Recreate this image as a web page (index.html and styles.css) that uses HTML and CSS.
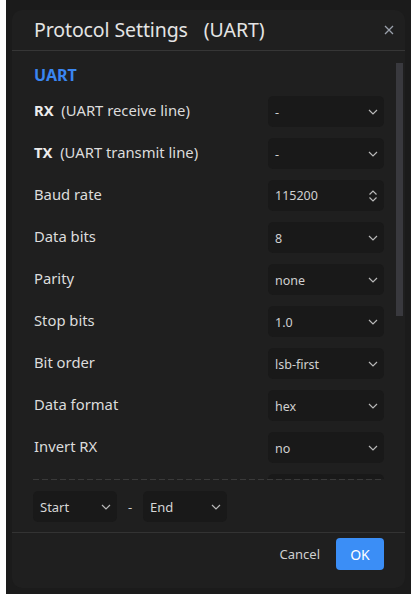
FILE: index.html
```html
<!DOCTYPE html>
<html>
<head>
<meta charset="utf-8">
<link rel="stylesheet" href="styles.css">
</head>
<body>
<div class="backdrop">
  <div class="dialog">
    <div class="header">
      <div class="title">Protocol Settings<span class="sub">(UART)</span></div>
      <svg class="close" width="10" height="10" viewBox="0 0 10 10"><path d="M1 1 L9 9 M9 1 L1 9" stroke="#9aa0ab" stroke-width="1.3" fill="none"/></svg>
    </div>
    <div class="body">
      <div class="section">UART</div>
      <div class="rows">
        <div class="row"><div class="label"><b>RX</b>&nbsp; (UART receive line)</div><div class="select"><span class="val">-</span><svg class="chev" width="10" height="6" viewBox="0 0 10 6"><path d="M1 1 L5 5 L9 1" /></svg></div></div>
        <div class="row"><div class="label"><b>TX</b>&nbsp; (UART transmit line)</div><div class="select"><span class="val">-</span><svg class="chev" width="10" height="6" viewBox="0 0 10 6"><path d="M1 1 L5 5 L9 1" /></svg></div></div>
        <div class="row"><div class="label">Baud rate</div><div class="select"><span class="val num">115200</span><svg class="chev" width="10" height="12" viewBox="0 0 10 12"><path d="M1.5 4.5 L5 1 L8.5 4.5 M1.5 7.5 L5 11 L8.5 7.5" /></svg></div></div>
        <div class="row"><div class="label">Data bits</div><div class="select"><span class="val">8</span><svg class="chev" width="10" height="6" viewBox="0 0 10 6"><path d="M1 1 L5 5 L9 1" /></svg></div></div>
        <div class="row"><div class="label">Parity</div><div class="select"><span class="val">none</span><svg class="chev" width="10" height="6" viewBox="0 0 10 6"><path d="M1 1 L5 5 L9 1" /></svg></div></div>
        <div class="row"><div class="label">Stop bits</div><div class="select"><span class="val">1.0</span><svg class="chev" width="10" height="6" viewBox="0 0 10 6"><path d="M1 1 L5 5 L9 1" /></svg></div></div>
        <div class="row"><div class="label">Bit order</div><div class="select"><span class="val">lsb-first</span><svg class="chev" width="10" height="6" viewBox="0 0 10 6"><path d="M1 1 L5 5 L9 1" /></svg></div></div>
        <div class="row"><div class="label">Data format</div><div class="select"><span class="val">hex</span><svg class="chev" width="10" height="6" viewBox="0 0 10 6"><path d="M1 1 L5 5 L9 1" /></svg></div></div>
        <div class="row"><div class="label">Invert RX</div><div class="select"><span class="val">no</span><svg class="chev" width="10" height="6" viewBox="0 0 10 6"><path d="M1 1 L5 5 L9 1" /></svg></div></div>
        <div class="row"><div class="label"></div><div class="select"></div></div>
      </div>
    </div>
    <div class="scrollthumb"></div>
    <div class="dashed"></div>
    <div class="range">
      <div class="select small"><span class="val">Start</span><svg class="chev" width="10" height="6" viewBox="0 0 10 6"><path d="M1 1 L5 5 L9 1" /></svg></div>
      <span class="dash">-</span>
      <div class="select small"><span class="val">End</span><svg class="chev" width="10" height="6" viewBox="0 0 10 6"><path d="M1 1 L5 5 L9 1" /></svg></div>
    </div>
    <div class="footer">
      <button class="btn cancel">Cancel</button>
      <button class="btn ok">OK</button>
    </div>
  </div>
</div>
</body>
</html>
```
FILE: styles.css
```css
html, body {
  margin: 0;
  padding: 0;
  background: #ffffff;
}
body {
  font-family: "Noto Sans", "Open Sans", sans-serif;
}
.backdrop {
  margin: 0 6px;
  height: 594px;
  box-sizing: border-box;
  padding: 10px 6px 6px 6px;
  background: #1b1b1b;
}
.dialog {
  position: relative;
  height: 578px;
  background: #1f1f1f;
  border-radius: 10px;
  display: flex;
  flex-direction: column;
  overflow: hidden;
}
.header {
  height: 40px;
  flex: none;
  display: flex;
  align-items: center;
  justify-content: space-between;
  padding: 0 11px 0 22px;
  border-bottom: 1px solid #363636;
}
.title {
  font-size: 19.5px;
  color: #e4e4e4;
  letter-spacing: -0.1px;
  margin-top: -1px;
}
.title .sub {
  margin-left: 16px;
}
.close {
  display: block;
}
.body {
  height: 428px;
  flex: none;
  overflow: hidden;
  box-sizing: border-box;
  padding: 12px 21px 0 22px;
}
.section {
  height: 24px;
  line-height: 24px;
  font-size: 16px;
  font-weight: 700;
  color: #3a86f0;
}
.rows {
  margin-top: 9px;
  display: flex;
  flex-direction: column;
  gap: 11px;
}
.row {
  height: 31px;
  display: flex;
  align-items: center;
  justify-content: space-between;
}
.label {
  font-size: 14.8px;
  color: #dcdcdc;
  margin-top: -3px;
}
.label b {
  font-weight: 700;
  color: #ececec;
}
.select {
  width: 116px;
  height: 31px;
  box-sizing: border-box;
  background: #191919;
  border-radius: 5px;
  display: flex;
  align-items: center;
  justify-content: space-between;
  padding: 0 6px 0 7px;
}
.val {
  font-size: 12.5px;
  color: #d0d0d0;
  margin-top: 2px;
}
.val.num {
  margin-top: 0;
}
.chev {
  display: block;
}
.chev path {
  fill: none;
  stroke: #b8b8b8;
  stroke-width: 1.2;
}
.scrollthumb {
  position: absolute;
  right: 2px;
  top: 53px;
  width: 7px;
  height: 253px;
  background: #39393e;
}
.dashed {
  height: 1px;
  flex: none;
  margin: 0 21px 0 21px;
  background: repeating-linear-gradient(90deg, #3a3a3a 0 6px, transparent 6px 9px);
}
.range {
  margin-top: 11px;
  padding: 0 21px;
  display: flex;
  align-items: center;
  height: 31px;
  flex: none;
}
.select.small {
  width: 84px;
}
.select.small .val {
  font-size: 13px;
  margin-top: 0;
  color: #d6d6d6;
}
.dash {
  width: 26px;
  text-align: center;
  color: #cfcfcf;
  font-size: 13px;
}
.footer {
  margin-top: 10px;
  border-top: 1px solid #333333;
  flex: none;
  display: flex;
  justify-content: flex-end;
  align-items: center;
  gap: 14px;
  padding: 5px 21px 0 0;
}
.btn {
  font-family: "Noto Sans", "Open Sans", sans-serif;
  border: none;
  font-size: 13px;
  height: 32px;
  border-radius: 4px;
  cursor: pointer;
}
.cancel {
  background: transparent;
  color: #cfcfcf;
  padding: 0 2px;
}
.ok {
  width: 48px;
  background: #3b8ef6;
  color: #ffffff;
  font-size: 14px;
}
```
